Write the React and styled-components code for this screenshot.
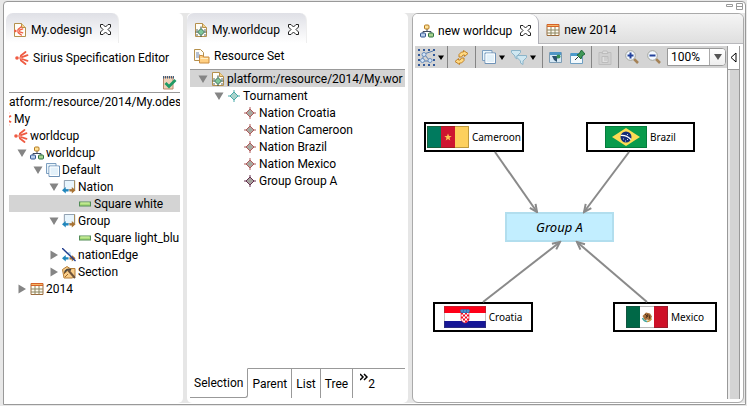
import React from "react";
import styled, { createGlobalStyle, css } from "styled-components";

const GlobalStyle = createGlobalStyle`
  * { box-sizing: border-box; }
  body {
    margin: 0;
    background: #e8e8e8;
    color: #000;
    font: 12px/16px Roboto, "Noto Sans", sans-serif;
  }
  button { font: inherit; color: inherit; padding: 0; border: 0; background: none; }
  svg { display: block; flex: none; }
`;

/* ---------- icons ---------- */

const Icon = ({ w = 14, h = w, box, children }) => (
  <svg width={w} height={h} viewBox={box || `0 0 ${w} ${h}`} fill="none" aria-hidden="true">
    {children}
  </svg>
);

const SiriusRays = () => (
  <g stroke="#ef5b42" strokeLinecap="round">
    <circle cx="2" cy="7" r="1.800" fill="#ef5b42" stroke="none" />
    <path d="M6 4.500 10.500 1M7 6.200 12.500 4.200M7 8 12.500 9.800M6 9.500 10.500 13" strokeWidth="1.800" />
    <path d="M5.700 4.800C4.700 6.200 4.700 7.800 5.700 9.200" strokeWidth="1.200" />
  </g>
);

const SiriusIcon = () => <Icon><SiriusRays /></Icon>;

const Page = () => (
  <>
    <path d="M1.500.500h7l4 4v9h-11z" fill="#fffdf6" stroke="#b5904c" />
    <path d="M8.500.500v4h4" fill="#f3d28c" stroke="#b5904c" />
  </>
);

const OdesignIcon = () => (
  <Icon>
    <Page />
    <g transform="translate(1 3) scale(.7)"><SiriusRays /></g>
  </Icon>
);

const Diamond = ({ edge, fill }) => (
  <g stroke={edge} fill={fill}>
    <path d="M6 2 8 4 10 6 8 8 6 10 4 8 2 6 4 4z" />
    <path d="M6 0v3M6 9v3M0 6h3M9 6h3" />
  </g>
);

const EcoreFileIcon = () => (
  <Icon>
    <Page />
    <path d="M2 7h2M10 7h2M2 12h2M10 12h2" stroke="#52656b" />
    <path d="m7 5.500 3.500 3.500L7 12.500 3.500 9z" fill="#7fc79a" stroke="#3b6b55" />
    <path d="M7 3.500v2M7 12.500V14M1.500 9h2M10.500 9h2" stroke="#2e4a44" />
  </Icon>
);

const TealDiamond = () => <Icon w={12}><Diamond edge="#49aaa9" fill="#a8d3cc" /></Icon>;
const RedDiamond = () => <Icon w={12}><Diamond edge="#b05a5b" fill="#a8a8a0" /></Icon>;
const PlumDiamond = () => <Icon w={12}><Diamond edge="#66304e" fill="#a5a19c" /></Icon>;

const HierarchyIcon = () => (
  <Icon>
    <path d="M7 5v2.500M3 9.500V7.500h8v2" stroke="#3f4a5f" />
    <rect x="4.500" y="1" width="4.500" height="4" rx="1" fill="#ffe29a" stroke="#b47a1e" />
    <rect x=".5" y="9" width="5" height="4" rx="1" fill="#b8ceec" stroke="#31548f" />
    <rect x="8.500" y="9" width="5" height="4" rx="1" fill="#a7d18e" stroke="#2f7242" />
  </Icon>
);

const LayersIcon = () => (
  <Icon>
    <path d="M.500.500h9.500v10H.500z" fill="#eaf5fb" stroke="#7d9fc0" />
    <path d="M3 3h10.500v10.500H3z" fill="#e3f1fa" stroke="#6f93b8" />
    <path d="M4 4h8.500v8.500H4z" stroke="#fff" />
  </Icon>
);

const SwapArrows = () => (
  <>
    <path d="M0 11 4 7.500v2.300h3v2.400H4v2.300z" fill="#1f86bd" />
    <path d="M14.500 11 10.500 7.500v2.300H8v2.400h2.500v2.300z" fill="#a97333" />
  </>
);

const ContainerIcon = () => (
  <Icon w={14} box="0 0 15 15">
    <path d="M2.500.500h11v10h-11z" fill="#e8f5fd" stroke="#8596a8" />
    <path d="M13.500.500v10" stroke="#aa8a4e" />
    <SwapArrows />
  </Icon>
);

const EdgeIcon = () => (
  <Icon w={14} box="0 0 15 15">
    <path d="m4 5 5-1 1 5" fill="#b9daf0" />
    <SwapArrows />
    <path d="m0 0 14.500 14" stroke="#213c8d" strokeWidth="1.500" />
  </Icon>
);

const StyleIcon = () => (
  <Icon>
    <rect x="1.500" y="5" width="11" height="4" fill="#a8dc78" stroke="#528c57" />
    <path d="M2.500 6h9" stroke="#d7f3a9" />
  </Icon>
);

const SectionIcon = () => (
  <Icon>
    <path d="M.500 4.500 5 1.500l3 2h5v8l-3 1.500H2z" fill="#f9ce8a" stroke="#b47d38" />
    <path d="M3 8c0-3 3-4.500 6-3" stroke="#4c4740" strokeWidth="2" />
    <path d="m6 5 7 8" stroke="#70543b" strokeWidth="2" />
    <path d="m2 9 2-2M3 12l3-3" stroke="#a56a28" />
  </Icon>
);

const TableIcon = () => (
  <Icon>
    <path d="M1 1.500h12v11H1z" fill="#fffdf3" stroke="#9d6b3c" />
    <path d="M1 1h12v3H1z" fill="#d6622a" />
    <path d="M1.500 2.500h11" stroke="#f4b764" />
    <path d="M1 7h12M1 10h12M5 4v8.500M9 4v8.500" stroke="#8c8560" />
  </Icon>
);

const ValidateIcon = () => (
  <Icon w={15}>
    <path d="M1.500 2h9.500v12H1.500z" fill="#efd1b8" stroke="#b8896b" />
    <path d="M1.500 1v2.500M3.500 1v2.500M5.500 1v2.500M7.500 1v2.500M9.500 1v2.500M11.500 1v2.500" stroke="#3d5e80" />
    <path d="m3.500 8 3.500 3.500L13.500 5" stroke="#209b66" strokeWidth="2.800" />
  </Icon>
);

const ResourceFolderIcon = () => (
  <Icon w={16} h={15}>
    <path d="M.500.500h6l3 3v8h-9z" fill="#fffdf6" stroke="#b5904c" />
    <path d="M2 4h3M2 6h4M2 8h3" stroke="#6a83ad" />
    <path d="M5.500 6.500h3l1 1.500h5.500v6h-9.500z" fill="#ffcf82" stroke="#c98c40" />
    <path d="M6.500 9.500h7.500" stroke="#fff0c4" />
  </Icon>
);

const CloseIcon = () => (
  <Icon w={11}>
    <path
      d="M.500.500H3l2.500 2.500L8 .500h2.500V3L8 5.500 10.500 8v2.500H8L5.500 8 3 10.500H.500V8L3 5.500.500 3z"
      fill="#fff"
      stroke="#222"
    />
  </Icon>
);

const Triangle = ({ open }) => (
  <Icon w={10}>
    <path d={open ? "M.500 1.500h9L5 9z" : "M1.500.500v9L9 5z"} fill="#858585" />
  </Icon>
);

const Caret = () => <Icon w={6} h={5}><path d="M0 .500h6L3 5z" fill="#000" /></Icon>;

const ArrangeIcon = () => (
  <Icon w={17}>
    <path
      d="M0 1h2m3 0h2m3 0h2m3 0h2M0 6h2m13 0h2M0 11h2m13 0h2M0 16h2m3 0h2m3 0h2m3 0h2"
      stroke="#31599a"
      strokeWidth="2"
    />
    <path d="M6 5 4 12M6 5l6 7H5M6 5l9-3" stroke="#567bac" />
    <g fill="#d6e6f6" stroke="#6b90c0">
      <circle cx="6" cy="5.500" r="2" />
      <circle cx="4.500" cy="11.500" r="2" />
      <circle cx="12" cy="11.500" r="2" />
    </g>
  </Icon>
);

const RefreshIcon = () => (
  <Icon w={15}>
    <g fill="#ffd982" stroke="#c08229" strokeLinejoin="round">
      <path d="M5 7V4.500L7.500 2h2V.500L14 3.500 10.500 6.500V5H9L7.500 7z" />
      <path d="M10 8v2.500L7.500 13h-2v1.500L1 11.500 4.500 8.500V10H6L7.500 8z" />
    </g>
  </Icon>
);

const FilterIcon = () => (
  <Icon w={16} h={15}>
    <g fill="#cfe7f1" stroke="#8bb4c9">
      <path d="M.500.500h9v2L6 6v3L4 7.500V6L.500 2.500z" />
      <path d="M6 5.500h9.500v2L12 11v3.500L9.500 13v-2L6 7.500z" />
    </g>
  </Icon>
);

const HideIcon = () => (
  <Icon w={13} h={12}>
    <path d="M.500 1.500h12v10H.500z" fill="#d6e8f4" stroke="#7d9cb4" />
    <path d="M1 1h11v3H1z" fill="#4f96c6" />
    <path d="M3 5h7L8 8v3L5 9z" fill="#284f6e" />
    <circle cx="9.500" cy="5.500" r="2" fill="#379055" />
  </Icon>
);

const PinIcon = () => (
  <Icon w={15} h={14}>
    <path d="M.500 3.500h12v10H.500z" fill="#f2f9fd" stroke="#6e9fc2" />
    <path d="M1 3h11v3H1z" fill="#4c9acb" />
    <path d="m5 10 4-4" stroke="#333" />
    <path d="m7 5 4 4 1-3 3-2-3.500-4L9 4z" fill="#3f9857" stroke="#246a3b" />
  </Icon>
);

const PasteIcon = () => (
  <Icon w={14} h={15}>
    <path d="M1 2.500h12v12H1z" stroke="#bdbdbd" fill="#d0d0d0" />
    <path d="M4 3.500 5 1h4l1 2.500z" fill="#ddd" stroke="#bdbdbd" />
    <path d="M4 6.500h6v6H4zM6 8h4M6 10h3" stroke="#bcbcbc" fill="#e0e0e0" />
  </Icon>
);

const MagnifierIcon = ({ plus }) => (
  <Icon w={14}>
    <path d="m9 9 4 4" stroke="#a58256" strokeWidth="2.500" />
    <circle cx="5.500" cy="5.500" r="4.800" fill="#f4faff" stroke="#a2a49c" />
    <path d={plus ? "M2.500 5.500h6M5.500 2.500v6" : "M2.500 5.500h6"} stroke="#24439b" strokeWidth="2" />
  </Icon>
);

/* ---------- flags ---------- */

const FlagFrame = ({ stroke, children }) => (
  <svg width="42" height="22" viewBox="0 0 42 22" aria-hidden="true">
    {children}
    <path d="M.500.500h41v21H.500z" fill="none" stroke={stroke} strokeOpacity=".35" />
  </svg>
);

const CameroonFlag = () => (
  <FlagFrame stroke="#443300">
    <path d="M0 0h14v22H0z" fill="#007a5e" />
    <path d="M14 0h14v22H14z" fill="#ce1530" />
    <path d="M28 0h14v22H28z" fill="#fdd05d" />
    <path d="m21 7.500 1 2.600h2.700l-2.200 1.700.8 2.700-2.300-1.600-2.300 1.600.8-2.700-2.200-1.700H20z" fill="#fbc253" />
  </FlagFrame>
);

const BrazilFlag = () => (
  <FlagFrame stroke="#004020">
    <path d="M0 0h42v22H0z" fill="#099b4c" />
    <path d="M21 2 35 11 21 20 7 11z" fill="#fddc55" />
    <circle cx="21" cy="11" r="5.500" fill="#142d78" />
    <path d="M15.700 9.500q6-.5 10.300 4" fill="none" stroke="#fff" strokeWidth="1.200" />
    <path d="M18 13h1M20 15h1M22 13.500h1M22 8.500h1" stroke="#cbd5ec" />
  </FlagFrame>
);

const CroatiaFlag = () => (
  <FlagFrame stroke="#555555">
    <path d="M0 0h42v7.300H0z" fill="#ff0018" />
    <path d="M0 7h42v8H0z" fill="#fff" />
    <path d="M0 15h42v7H0z" fill="#171796" />
    <path d="M17 6.500h8v7q-1 3-4 3.500-3-.5-4-3.500z" fill="#fff" stroke="#e0102a" strokeWidth=".6" />
    <path
      d="M17 6.500h2v2h-2zM21 6.500h2v2h-2zM19 8.500h2v2h-2zM23 8.500h2v2h-2zM17 10.500h2v2h-2zM21 10.500h2v2h-2zM19 12.500h2v2h-2zM23 12.500h2v2h-2zM21 14.500h2v2h-2z"
      fill="#f20d25"
    />
    <path d="m16 4 2-1 1.500.6L21 3l1.500.6L24 3l2 1-.8 3h-8.400z" fill="#2e74b8" />
    <path d="M18 4v2M21 4v2M24 4v2" stroke="#6ea8d6" />
  </FlagFrame>
);

const MexicoFlag = () => (
  <FlagFrame stroke="#333333">
    <path d="M0 0h14v22H0z" fill="#006847" />
    <path d="M14 0h14v22H14z" fill="#fff" />
    <path d="M28 0h14v22H28z" fill="#ce1028" />
    <path d="m16.500 10 3.500-3.500 4 1 2 3-2 4-3-1-2 1z" fill="#a9713c" />
    <path d="m19 8 3 3m0-3-2 4m3-3 1 4" stroke="#503018" />
    <path d="M16.500 12q1.500 3.500 4.500 3.500" fill="none" stroke="#49a9a1" strokeWidth="1.500" />
    <path d="M21 15.500q3 0 4.500-3" fill="none" stroke="#c69a45" strokeWidth="1.500" />
  </FlagFrame>
);

/* ---------- window and panes ---------- */

const Window = styled.main`
  min-height: calc(100vh - 2px);
  margin: 1px 1px 1px 3px;
  border: 1px solid #999;
  border-radius: 4px 4px 0 0;
  background: #fff;
  display: flex;
  flex-direction: column;
`;

const WindowBar = styled.header`
  height: 11px;
  padding: 1px 2px 0;
  display: flex;
  justify-content: flex-end;
  gap: 3px;
`;

const WindowButton = styled.button`
  width: 7px;
  height: 7px;
  display: block;
`;

const Workbench = styled.div`
  flex: 1;
  display: grid;
  grid-template-columns: 179px 221px minmax(0, 1fr);
  gap: 4px;
  background: #e6e6e6;
  margin-bottom: 1px;
`;

const Pane = styled.section`
  min-width: 0;
  background: #fff;
  border-radius: 0 5px 5px 0;
  display: flex;
  flex-direction: column;
  ${(p) => p.$inner && css`border-radius: 5px;`}
  ${(p) => p.$framed && css`
    border: 1px solid #aaa;
    border-radius: 6px;
    margin-right: 1px;
    overflow: hidden;
  `}
`;

const TabBar = styled.div`
  height: 30px;
  flex: none;
  display: flex;
  ${(p) => p.$filled && css`background: linear-gradient(#f5f5f5, #dedede);`}
`;

const Tab = styled.div`
  display: flex;
  align-items: center;
  gap: 4px;
  padding: 3px 7px 0;
  border-radius: 7px 7px 0 0;
  ${(p) => p.$look === "soft" && css`
    margin-left: ${p.$indent}px;
    background: linear-gradient(#dfe0e6, #fff);
    border-right: 1px solid #eee;
  `}
  ${(p) => p.$look === "front" && css`
    background: #fff;
    border-right: 1px solid #b0b0b8;
    border-radius: 0 9px 0 0;
  `}
  ${(p) => p.$look === "back" && css`
    flex: 1;
    border-bottom: 1px solid #b8b8bc;
    border-radius: 0;
  `}
`;

const CloseButton = styled.button`
  margin-left: 4px;
`;

const Heading = styled.h1`
  margin: 0;
  padding: 0 ${(p) => p.$pad}px;
  height: ${(p) => p.$height}px;
  display: flex;
  align-items: center;
  gap: 4px;
  font: inherit;
  white-space: nowrap;
`;

const ActionRow = styled.div`
  height: 20px;
  display: flex;
  justify-content: flex-end;
  padding-right: 6px;
`;

const Tree = styled.ul`
  list-style: none;
  margin: 0 3px 0 ${(p) => p.$left}px;
  padding: 0;
  border-top: 1px solid #999;
  overflow: hidden;
`;

const TreeRow = styled.li`
  height: 17px;
  overflow: hidden;
  background: ${(p) => (p.$selected ? "#d4d4d4" : "transparent")};
`;

const TreeItem = styled.div`
  margin-left: ${(p) => p.$offset}px;
  height: 17px;
  display: flex;
  align-items: center;
  gap: 2px;
  white-space: nowrap;
`;

const Twisty = styled.button`
  width: 11px;
  flex: none;
`;

const IconSlot = styled.span`
  width: 14px;
  flex: none;
  display: flex;
  justify-content: center;
`;

const PageTabs = styled.div`
  margin: auto 3px 5px;
  display: flex;
  height: 30px;
`;

const PageTab = styled.button`
  padding: 0 4px;
  border-top: 1px solid #999;
  border-right: 1px solid #999;
  ${(p) => p.$active && css`
    border-top-color: transparent;
    border-bottom: 1px solid #999;
    border-bottom-right-radius: 3px;
  `}
`;

const MoreTabs = styled.button`
  flex: 1;
  border-top: 1px solid #999;
  text-align: left;
  padding-left: 7px;
  display: flex;
  align-items: center;
`;

const MoreMark = styled.span`
  align-self: flex-start;
  padding-top: 3px;
`;

const EditorBody = styled.div`
  flex: 1;
  margin: 2px 3px 3px 2px;
  display: grid;
  grid-template-columns: minmax(0, 1fr) 13px;
`;

const Diagram = styled.div`
  min-width: 0;
  display: flex;
  flex-direction: column;
`;

const Toolbar = styled.div`
  height: 22px;
  flex: none;
  background: #d4d4d4;
  display: flex;
  align-items: stretch;
`;

const ToolGroup = styled.div`
  display: flex;
  align-items: center;
  gap: ${(p) => p.$gap ?? 6}px;
  padding: 0 ${(p) => p.$pad ?? 6}px;
  ${(p) => !p.$last && css`border-right: 1px solid #858585;`}
`;

const ToolButton = styled.button`
  display: flex;
  align-items: center;
  gap: 3px;
`;

const ZoomBox = styled.div`
  position: relative;
  width: 59px;
`;

const ZoomSelect = styled.select`
  appearance: none;
  display: block;
  width: 100%;
  height: 18px;
  padding: 0 18px 0 3px;
  border: 1px solid #999;
  border-radius: 0 4px 4px 0;
  background: #fff;
  color: #000;
  font: inherit;
`;

const ZoomArrow = styled.span`
  position: absolute;
  inset: 1px 1px 1px auto;
  width: 16px;
  border-left: 1px solid #aaa;
  border-radius: 0 3px 3px 0;
  background: linear-gradient(#fff, #eee);
  display: grid;
  place-items: center;
  pointer-events: none;
`;

const Canvas = styled.div`
  position: relative;
  flex: 1;
  min-height: 280px;
`;

const Edges = styled.svg`
  position: absolute;
  inset: 0;
  width: 100%;
  height: 100%;
`;

const Node = styled.div`
  position: absolute;
  left: ${(p) => p.$x}px;
  top: ${(p) => p.$y}px;
  width: ${(p) => p.$w}px;
  height: 30px;
  display: flex;
  align-items: center;
  justify-content: center;
  gap: 3px;
  background: #fff;
  border: 2px solid #000;
  font: 10px/16px "Noto Sans", sans-serif;
`;

const GroupNode = styled(Node)`
  background: #c2eeff;
  border-color: #b2deee;
  font-size: 13px;
  font-style: italic;
`;

const Palette = styled.aside`
  border-left: 1px solid #999;
  border-right: 1px solid #999;
  background: #d4d4d4;
  box-shadow: inset 2px 0 #eee;
`;

const PaletteToggle = styled.button`
  width: 100%;
  height: 24px;
  display: grid;
  place-items: center;
  background: #fff;
  border-bottom: 1px solid #999;
`;

/* ---------- data ---------- */

const designRows = [
  { depth: 0, icon: SiriusIcon, label: "My" },
  { depth: 1, icon: SiriusIcon, label: "worldcup" },
  { depth: 2, icon: HierarchyIcon, label: "worldcup", open: true },
  { depth: 3, icon: LayersIcon, label: "Default", open: true },
  { depth: 4, icon: ContainerIcon, label: "Nation", open: true },
  { depth: 5, icon: StyleIcon, label: "Square white", selected: true },
  { depth: 4, icon: ContainerIcon, label: "Group", open: true },
  { depth: 5, icon: StyleIcon, label: "Square light_blu" },
  { depth: 4, icon: EdgeIcon, label: "nationEdge", open: false },
  { depth: 4, icon: SectionIcon, label: "Section", open: false },
  { depth: 2, icon: TableIcon, label: "2014", open: false },
];

const modelRows = [
  { depth: 0, icon: EcoreFileIcon, label: "platform:/resource/2014/My.wor", open: true, selected: true },
  { depth: 1, icon: TealDiamond, label: "Tournament", open: true },
  { depth: 2, icon: RedDiamond, label: "Nation Croatia" },
  { depth: 2, icon: RedDiamond, label: "Nation Cameroon" },
  { depth: 2, icon: RedDiamond, label: "Nation Brazil" },
  { depth: 2, icon: RedDiamond, label: "Nation Mexico" },
  { depth: 2, icon: PlumDiamond, label: "Group Group A" },
];

const nations = [
  { name: "Cameroon", flag: CameroonFlag, x: 9, y: 54, w: 100 },
  { name: "Brazil", flag: BrazilFlag, x: 171, y: 54, w: 109 },
  { name: "Croatia", flag: CroatiaFlag, x: 18, y: 234, w: 100 },
  { name: "Mexico", flag: MexicoFlag, x: 198, y: 234, w: 104 },
];

const edges = ["M80 84 122 144", "M214 84 169 144", "M68 234 145 174", "M232 234 162 174"];

/* ---------- parts ---------- */

const TreeRows = ({ rows, base }) =>
  rows.map(({ depth, icon: Glyph, label, open, selected }, i) => (
    <TreeRow key={i} $selected={selected}>
      <TreeItem $offset={base + depth * 16}>
        {open === undefined ? (
          <Twisty as="span" />
        ) : (
          <Twisty aria-label={`Toggle ${label}`} aria-expanded={open}><Triangle open={open} /></Twisty>
        )}
        <IconSlot><Glyph /></IconSlot>
        <span>{label}</span>
      </TreeItem>
    </TreeRow>
  ));

const Close = ({ name }) => (
  <CloseButton aria-label={`Close ${name}`}><CloseIcon /></CloseButton>
);

const DesignPane = () => (
  <Pane>
    <TabBar>
      <Tab $look="soft" $indent={2}><OdesignIcon /><span>My.odesign</span><Close name="My.odesign" /></Tab>
    </TabBar>
    <Heading $pad={11} $height={29}><SiriusIcon /><span>Sirius Specification Editor</span></Heading>
    <ActionRow><ToolButton aria-label="Validate"><ValidateIcon /></ToolButton></ActionRow>
    <Tree $left={5}>
      <TreeRow><TreeItem $offset={0}>atform:/resource/2014/My.odes</TreeItem></TreeRow>
      <TreeRows rows={designRows} base={-24} />
    </Tree>
  </Pane>
);

const ModelPane = () => (
  <Pane $inner>
    <TabBar>
      <Tab $look="soft" $indent={0}><EcoreFileIcon /><span>My.worldcup</span><Close name="My.worldcup" /></Tab>
    </TabBar>
    <Heading $pad={7} $height={26}><ResourceFolderIcon /><span>Resource Set</span></Heading>
    <Tree $left={3}><TreeRows rows={modelRows} base={8} /></Tree>
    <PageTabs>
      <PageTab $active>Selection</PageTab>
      <PageTab>Parent</PageTab>
      <PageTab>List</PageTab>
      <PageTab>Tree</PageTab>
      <MoreTabs aria-label="Show 2 more tabs">
        <MoreMark>
          <Icon w={8} h={10}><path d="m0 2 3 3-3 3M4 2l3 3-3 3" stroke="#000" strokeWidth="1.500" /></Icon>
        </MoreMark>
        <span>2</span>
      </MoreTabs>
    </PageTabs>
  </Pane>
);

const EditorToolbar = () => (
  <Toolbar>
    <ToolGroup $pad={3}>
      <ToolButton aria-label="Arrange"><ArrangeIcon /><Caret /></ToolButton>
    </ToolGroup>
    <ToolGroup><ToolButton aria-label="Refresh"><RefreshIcon /></ToolButton></ToolGroup>
    <ToolGroup>
      <ToolButton aria-label="Layers"><LayersIcon /><Caret /></ToolButton>
      <ToolButton aria-label="Filters"><FilterIcon /><Caret /></ToolButton>
    </ToolGroup>
    <ToolGroup $gap={8}>
      <ToolButton aria-label="Hide elements"><HideIcon /></ToolButton>
      <ToolButton aria-label="Pin elements"><PinIcon /></ToolButton>
    </ToolGroup>
    <ToolGroup><ToolButton aria-label="Paste format" disabled><PasteIcon /></ToolButton></ToolGroup>
    <ToolGroup $gap={8} $last>
      <ToolButton aria-label="Zoom in"><MagnifierIcon plus /></ToolButton>
      <ToolButton aria-label="Zoom out"><MagnifierIcon /></ToolButton>
    </ToolGroup>
    <ToolGroup $pad={0} $last>
      <ZoomBox>
        <ZoomSelect aria-label="Zoom level"><option>100%</option></ZoomSelect>
        <ZoomArrow><Icon w={8} h={6}><path d="M0 0h8L4 6z" fill="#555" /></Icon></ZoomArrow>
      </ZoomBox>
    </ToolGroup>
  </Toolbar>
);

const DiagramPane = () => (
  <Pane $framed>
    <TabBar $filled>
      <Tab $look="front"><HierarchyIcon /><span>new worldcup</span><Close name="new worldcup" /></Tab>
      <Tab $look="back"><TableIcon /><span>new 2014</span></Tab>
    </TabBar>
    <EditorBody>
      <Diagram>
        <EditorToolbar />
        <Canvas>
          {nations.map(({ name, flag: Flag, x, y, w }) => (
            <Node key={name} $x={x} $y={y} $w={w}><Flag /><span>{name}</span></Node>
          ))}
          <GroupNode $x={90} $y={144} $w={109}>Group A</GroupNode>
          <Edges fill="none" stroke="#8a8a8a" strokeWidth="2" aria-hidden="true">
            <defs>
              <marker id="tip" viewBox="0 0 10 10" refX="8.500" refY="5" markerWidth="10" markerHeight="10"
                markerUnits="userSpaceOnUse" orient="auto">
                <path d="M1 1.500 8.500 5 1 8.500" fill="none" stroke="#8a8a8a" strokeWidth="2" />
              </marker>
            </defs>
            {edges.map((d) => <path key={d} d={d} markerEnd="url(#tip)" />)}
          </Edges>
        </Canvas>
      </Diagram>
      <Palette>
        <PaletteToggle aria-label="Show palette">
          <Icon w={7} h={11}><path d="M6 1v9L1 5.500z" stroke="#000" /></Icon>
        </PaletteToggle>
      </Palette>
    </EditorBody>
  </Pane>
);

export default function App() {
  return (
    <>
      <GlobalStyle />
      <Window>
        <WindowBar>
          <WindowButton aria-label="Minimize">
            <Icon w={7}><path d="M.500 1.500h6v2h-6z" stroke="#999" /></Icon>
          </WindowButton>
          <WindowButton aria-label="Maximize">
            <Icon w={7}><path d="M.500.500h6v6h-6zM.500 3.500h6" stroke="#999" /></Icon>
          </WindowButton>
        </WindowBar>
        <Workbench>
          <DesignPane />
          <ModelPane />
          <DiagramPane />
        </Workbench>
      </Window>
    </>
  );
}
